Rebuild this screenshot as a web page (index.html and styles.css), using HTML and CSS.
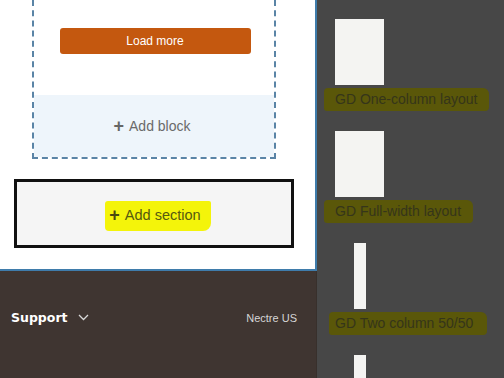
FILE: index.html
```html
<!DOCTYPE html>
<html>
<head>
<meta charset="utf-8">
<link rel="stylesheet" href="styles.css">
</head>
<body>
<div class="page">
  <div class="main">
    <div class="canvas">
      <div class="block-wrap">
        <div class="block-content">
          <button class="load-more">Load more</button>
        </div>
        <div class="add-block"><span class="plus">+</span> Add block</div>
      </div>
      <div class="section-box">
        <span class="add-section"><span class="plus">+</span> Add section</span>
      </div>
    </div>
    <div class="footer">
      <div class="support">Support
        <svg class="chev" width="11" height="7" viewBox="0 0 11 7"><path d="M1 1 L5.5 5.5 L10 1" fill="none" stroke="#d8d8d8" stroke-width="1.3"/></svg>
      </div>
      <div class="region">Nectre US</div>
    </div>
  </div>
  <div class="sidebar">
    <div class="layout">
      <div class="thumb"></div>
      <div class="label">GD One-column layout</div>
    </div>
    <div class="layout">
      <div class="thumb"></div>
      <div class="label">GD Full-width layout</div>
    </div>
    <div class="layout">
      <div class="thumb narrow"></div>
      <div class="label shift">GD Two column 50/50</div>
    </div>
    <div class="layout">
      <div class="thumb narrow"></div>
    </div>
  </div>
</div>
</body>
</html>
```
FILE: styles.css
```css
html, body {
  margin: 0;
  padding: 0;
  width: 504px;
  height: 378px;
  overflow: hidden;
}
body {
  font-family: "Liberation Sans", Arial, sans-serif;
}
.page {
  display: flex;
  width: 504px;
  height: 378px;
}
.main {
  width: 317px;
  display: flex;
  flex-direction: column;
}
.canvas {
  height: 269px;
  background: #ffffff;
  border-right: 2px solid #3f7cab;
  border-bottom: 2px solid #3f7cab;
  box-sizing: content-box;
  width: 315px;
}
.block-wrap {
  margin-left: 32px;
  width: 240px;
  border-left: 2px dashed #5a84a6;
  border-right: 2px dashed #5a84a6;
  border-bottom: 2px dashed #5a84a6;
  display: flex;
  flex-direction: column;
}
.block-content {
  height: 95px;
  display: flex;
  justify-content: center;
  align-items: flex-start;
  padding-top: 28px;
  box-sizing: border-box;
}
.load-more {
  width: 191px;
  height: 26px;
  background: #c4580f;
  color: #ffffff;
  border: 0;
  border-radius: 3px;
  font-family: "Liberation Sans", Arial, sans-serif;
  font-size: 12px;
  padding: 0;
  margin-left: 2px;
}
.add-block {
  height: 62px;
  background: #eef5fb;
  color: #6a6a6a;
  font-size: 14px;
  display: flex;
  align-items: center;
  justify-content: center;
  gap: 5px;
  padding-right: 4px;
}
.plus {
  font-weight: bold;
  font-size: 18px;
}
.add-block .plus {
  color: #666;
}
.section-box {
  margin-top: 20px;
  margin-left: 14px;
  width: 280px;
  height: 69px;
  box-sizing: border-box;
  border: 3px solid #111111;
  background: #f5f5f5;
  display: flex;
  align-items: center;
  justify-content: center;
  padding-left: 8px;
  padding-top: 4px;
}
.add-section {
  background: #f4f40a;
  color: #555a10;
  font-size: 14.5px;
  padding: 4px 10px 5px 4px;
  border-radius: 3px 2px 8px 4px;
  display: inline-flex;
  align-items: center;
  gap: 5px;
}
.add-section .plus {
  color: #4a4a10;
}
.footer {
  flex: 1;
  background: #3f3531;
  display: flex;
  align-items: center;
  justify-content: space-between;
  padding: 0 19px 14px 11px;
  border-right: 1px solid #38302c;
}
.support {
  color: #ffffff;
  font-family: "DejaVu Sans", sans-serif;
  font-weight: bold;
  font-size: 12.5px;
  display: flex;
  align-items: center;
  gap: 10px;
}
.region {
  color: #d6d6d6;
  font-size: 11px;
}
.sidebar {
  flex: 1;
  background: #474747;
  padding: 19px 0 0 18px;
  display: flex;
  flex-direction: column;
  gap: 20px;
  overflow: hidden;
}
.layout {
  display: flex;
  flex-direction: column;
  align-items: flex-start;
  gap: 3px;
}
.thumb {
  width: 49px;
  height: 66px;
  background: #f4f4f2;
}
.thumb.narrow {
  width: 12px;
  margin-left: 19px;
}
.label {
  margin-left: -11px;
  background: #5a5709;
  color: #35351a;
  font-size: 14px;
  height: 23px;
  line-height: 23px;
  padding: 0 12px 0 11px;
  border-radius: 4px 6px 4px 3px;
  white-space: nowrap;
}
.label.shift {
  margin-left: -6px;
  padding: 0 14px 0 6px;
}
```
